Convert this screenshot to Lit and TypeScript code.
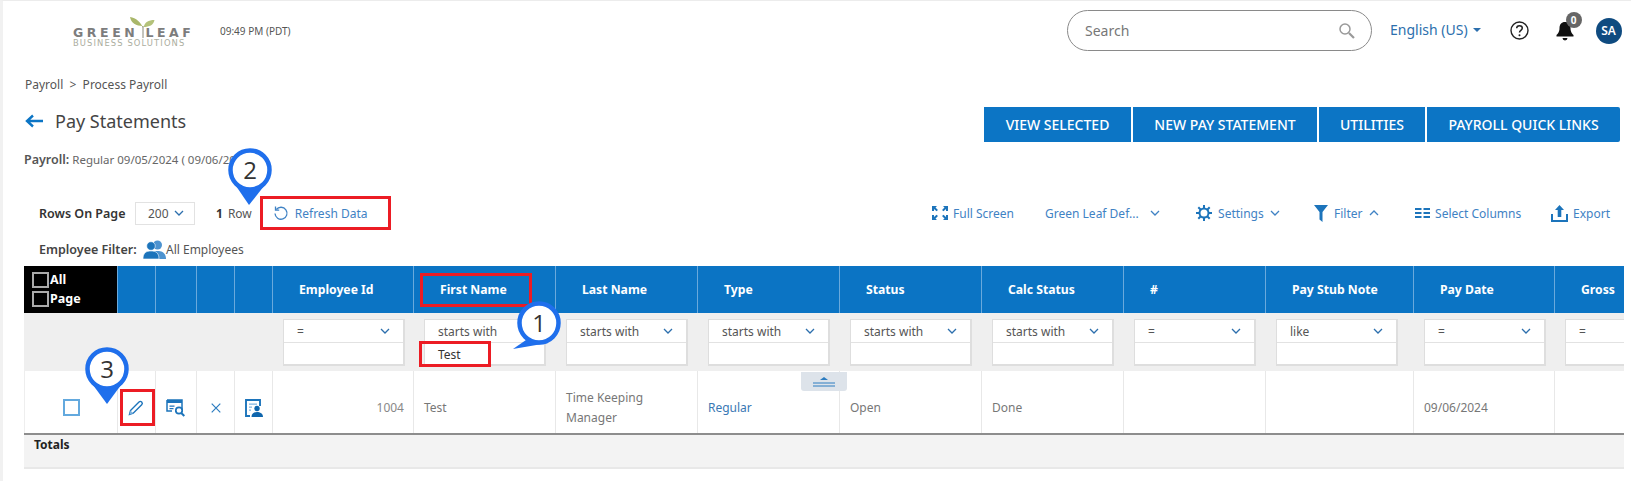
import { LitElement, html, css, svg } from "lit";
import { customElement } from "lit/decorators.js";

const chev = (up = false, cls = "chev") => html`<svg class=${cls} viewBox="0 0 10 6" width="10" height="6"><path d=${up ? "M1 5l4-4 4 4" : "M1 1l4 4 4-4"} fill="none" stroke="currentColor" stroke-width="1.3"/></svg>`;

const COLS = [
  { name: "Employee Id", op: "=", val: "", data: "1004", cls: "num" },
  { name: "First Name", op: "starts with", val: "Test", data: "Test", cls: "" },
  { name: "Last Name", op: "starts with", val: "", data: "Time Keeping Manager", cls: "" },
  { name: "Type", op: "starts with", val: "", data: "Regular", cls: "link" },
  { name: "Status", op: "starts with", val: "", data: "Open", cls: "" },
  { name: "Calc Status", op: "starts with", val: "", data: "Done", cls: "" },
  { name: "#", op: "=", val: "", data: "", cls: "" },
  { name: "Pay Stub Note", op: "like", val: "", data: "", cls: "" },
  { name: "Pay Date", op: "=", val: "", data: "09/06/2024", cls: "" },
  { name: "Gross", op: "=", val: "", data: "", cls: "last" },
];

const marker = (n: string, x: number, y: number, tx: number, ty: number, a1: number[], a2: number[]) => {
  const w = 70, h = 70;
  return html`<svg class="marker" style="left:${x - 35}px;top:${y - 25}px" width=${w} height=${h} viewBox="0 0 70 70">
    ${svg`<path d="M${a1[0]} ${a1[1]}L${tx - x + 35} ${ty - y + 25}L${a2[0]} ${a2[1]}Z" fill="#1f6fec"/>
    <circle cx="35" cy="25" r="19.5" fill="#fff" stroke="#1f6fec" stroke-width="4.5"/>
    <text x="35" y="33.5" text-anchor="middle" font-family="Open Sans, sans-serif" font-size="24" fill="#333">${n}</text>`}
  </svg>`;
};

@customElement("app-root")
export class AppRoot extends LitElement {
  static styles = css`
    :host {
      display: block;
      position: relative;
      width: 1631px;
      height: 481px;
      overflow: hidden;
      background: #fff;
      box-sizing: border-box;
      border-left: 3px solid #f1f1f1;
      border-top: 1px solid #ececec;
      font-family: "Noto Sans", sans-serif;
      font-size: 12px;
      color: #555;
    }
    .topbar { display: flex; align-items: center; height: 59px; padding-left: 70px; }
    .logo { width: 123px; height: 30px; display: flex; flex-direction: column; align-items: flex-start; position: relative; margin-top: 2px; font-family: "DejaVu Sans", sans-serif; flex: none; }
    .logo svg { position: absolute; left: 57px; top: 0; }
    .logo .l1 { font-size: 12.5px; font-weight: 700; letter-spacing: 3.6px; color: #7d7d7d; line-height: 12px; margin-top: 10px; white-space: nowrap; word-spacing: -1px; }
    .logo .l2 { font-size: 8.4px; color: #abad9e; line-height: 9px; white-space: nowrap; letter-spacing: 1.1px; }
    .time { font-size: 10px; color: #555; margin-left: 24px; margin-top: 1px; width: 200px; white-space: nowrap; flex: none; }
    .search { margin-left: 647px; width: 305px; height: 41px; box-sizing: border-box; border: 1px solid #8a8a8a; border-radius: 21px; display: flex; align-items: center; justify-content: space-between; padding: 0 16px 0 17px; color: #777; font-size: 14px; flex: none; }
    .lang { color: #2c6fad; font-size: 14px; margin-left: 18px; display: flex; align-items: center; gap: 5px; white-space: nowrap; margin-top: -2px; }
    .caret { width: 0; height: 0; border-left: 4px solid transparent; border-right: 4px solid transparent; border-top: 4px solid #2c6fad; }
    .help { margin-left: 29px; display: flex; }
    .bell { margin-left: 27px; position: relative; display: flex; width: 18px; }
    .badge { position: absolute; left: 10px; top: -9px; width: 16px; height: 16px; border-radius: 50%; background: #666; color: #fff; font-size: 10px; font-weight: 700; display: flex; align-items: center; justify-content: center; }
    .avatar { margin-left: 22px; width: 26px; height: 26px; border-radius: 50%; background: #0f4b80; color: #fff; font-size: 12px; font-weight: 600; display: flex; align-items: center; justify-content: center; flex: none; }

    main { padding-left: 21px; }
    .crumb { height: 20px; margin-top: 15px; line-height: 20px; font-size: 12px; color: #555; white-space: nowrap; margin-left: 1px; }
    .titlebar { display: flex; align-items: center; height: 35px; margin-top: 12px; }
    .arrow { margin: 0 0 7px 1px; }
    .titlebar h1 { margin: 0 0 8px 11px; font-size: 18px; font-weight: 400; color: #444; }
    .buttons { margin-left: auto; margin-right: 11px; display: flex; gap: 2px; }
    .btn { height: 35px; background: #0c75c5; color: #fff; font-size: 14px; display: flex; align-items: center; justify-content: center; white-space: nowrap; font-weight: 500; }
    .btn.last { border-radius: 0 2px 2px 0; }
    .payroll { height: 22px; line-height: 22px; margin-top: 7px; font-size: 11.5px; color: #666; white-space: nowrap; }
    .payroll b { color: #555; font-weight: 600; font-size: 12.5px; }
    .tools { display: flex; align-items: center; height: 32px; margin-top: 26px; padding-left: 15px; white-space: nowrap; }
    .rowlbl { font-weight: 600; color: #333; font-size: 12.5px; width: 96px; flex: none; }
    .sel { width: 60px; height: 23px; box-sizing: border-box; border: 1px solid #e2e2e2; display: flex; align-items: center; gap: 5px; padding-left: 12px; color: #555; }
    .sel .chev { color: #2c6fad; }
    .cnt { margin-left: 21px; font-size: 12px; color: #555; }
    .cnt b { color: #333; margin-right: 5px; }
    .refresh { margin-left: 21px; color: #3f82c4; display: flex; align-items: center; gap: 6px; font-size: 12px; }
    .right { margin-left: auto; margin-right: 21px; display: flex; align-items: center; color: #3f82c4; font-size: 12px; }
    .right > span { display: flex; align-items: center; gap: 5px; }
    .emp { display: flex; align-items: center; height: 24px; margin-top: 8px; padding-left: 15px; white-space: nowrap; }
    .emp b { font-weight: 600; color: #444; font-size: 12.5px; width: 104px; flex: none; }
    .emp span { color: #555; }

    .table { display: grid; grid-template-columns: 93px 38px 41px 38px 38px 141px 142px 142px 142px 142px 142px 142px 148px 141px 70px; grid-template-rows: 47px 58px 62px 2px 34px; margin-top: 5px; width: 1600px; overflow: hidden; }
    .h { background: #0b74c4; color: #fff; font-weight: 700; font-size: 12.2px; display: flex; align-items: center; padding-left: 26px; border-left: 1px solid #6aa9dc; white-space: nowrap; box-sizing: border-box; }
    .h.tiny { padding: 0; }
    .black { background: #000; color: #fff; font-weight: 700; font-size: 12.5px; display: flex; flex-direction: column; gap: 2px; padding: 5px 0 0 8px; box-sizing: border-box; }
    .black div { display: flex; align-items: center; height: 17px; gap: 1px; }
    .black i { width: 17px; height: 16px; box-sizing: border-box; border: 2px solid #aaa; display: block; }
    .f0 { grid-column: span 5; background: #efefef; }
    .f { background: #efefef; padding: 6px 9px 0 11px; box-sizing: border-box; min-width: 0; overflow: hidden; }
    .f.last { padding-right: 0; }
    .fbox { height: 47px; border: 1px solid #dedede; border-bottom-width: 2px; border-right-width: 2px; background: #fff; box-sizing: border-box; width: 122px; }
    .fsel { height: 22px; border-bottom: 1px solid #e2e2e2; display: flex; align-items: center; justify-content: space-between; padding: 0 13px 0 13px; color: #555; font-size: 12px; }
    .fsel .chev { color: #2c6fad; }
    .fin { padding-left: 13px; line-height: 24px; color: #333; font-size: 12px; }
    .c { border-left: 1px solid #e8e8e8; display: flex; align-items: center; color: #777; box-sizing: border-box; background: #fff; padding: 12px 10px 0; line-height: 20px; font-size: 12px; }
    .c.first { border-left: 1px solid #eee; justify-content: center; padding: 11px 0 0 0; }
    .c.first i { width: 17px; height: 17px; box-sizing: border-box; border: 2px solid #63a9de; display: block; }
    .c.icon { justify-content: center; padding: 11px 0 0 0; }
    .c.num { justify-content: flex-end; color: #888; padding-right: 9px; }
    .c.link { color: #3a78b4; }
    .sep { grid-column: 1 / -1; background: #8d8d8d; }
    .totals { grid-column: 1 / -1; background: #f3f3f3; border-bottom: 2px solid #e8e8e8; font-weight: 700; color: #222; padding-left: 10px; line-height: 19px; box-sizing: border-box; }

    .red { position: absolute; border: 3.5px solid #ec1c24; box-sizing: border-box; pointer-events: none; }
    .marker { position: absolute; overflow: visible; }
    .tab { position: absolute; left: 798px; top: 371px; width: 46px; height: 19px; background: #dde3ea; border-radius: 0 0 3px 3px; display: flex; align-items: center; justify-content: center; }
  `;

  render() {
    const buttons = [["VIEW SELECTED", 147], ["NEW PAY STATEMENT", 184], ["UTILITIES", 106], ["PAYROLL QUICK LINKS", 193]] as const;
    return html`
      <div class="topbar">
        <div class="logo">
          <svg width="26" height="21" viewBox="0 0 26 21"><path d="M13 11C11 5 6 1 0 0c1 6 6 9 13 9z" fill="#a9b76a"/><path d="M13.500 11c1-6 5-8 11-8-1 5-5 7-11 7z" fill="#b4c27a"/><path d="M13 9v12" stroke="#8a8a7a" stroke-width="1"/></svg>
          <div class="l1">GREEN LEAF</div>
          <div class="l2">BUSINESS SOLUTIONS</div>
        </div>
        <div class="time">09:49 PM (PDT)</div>
        <div class="search">
          <span>Search</span>
          <svg width="17" height="17" viewBox="0 0 17 17"><circle cx="7" cy="7" r="5" fill="none" stroke="#999" stroke-width="1.5"/><path d="M11 11l5 5" stroke="#999" stroke-width="2.2"/></svg>
        </div>
        <div class="lang">English (US)<span class="caret"></span></div>
        <div class="help"><svg width="19" height="19" viewBox="0 0 19 19"><circle cx="9.500" cy="9.500" r="8.500" fill="none" stroke="#222" stroke-width="1.400"/><path d="M6.700 7.300c0-1.700 1.200-2.600 2.800-2.600s2.800.9 2.800 2.400c0 2.200-2.800 2.200-2.800 4.400" fill="none" stroke="#222" stroke-width="1.500"/><circle cx="9.500" cy="14.200" r="1" fill="#222"/></svg></div>
        <div class="bell">
          <svg width="18" height="20" viewBox="0 0 18 20"><path d="M9 1c-3.600 0-5.500 2.600-5.500 6 0 4-1.600 5.600-3 7v1.500h17V14c-1.400-1.400-3-3-3-7 0-3.400-1.900-6-5.500-6z" fill="#111"/><path d="M6.500 17h5a2.500 2.500 0 0 1-5 0z" fill="#111"/></svg>
          <span class="badge">0</span>
        </div>
        <div class="avatar">SA</div>
      </div>

      <main>
        <div class="crumb">Payroll &nbsp;&gt;&nbsp; Process Payroll</div>
        <div class="titlebar">
          <svg class="arrow" width="19" height="14" viewBox="0 0 19 14"><path d="M18 7H3M8 1.500 2 7l6 5.500" fill="none" stroke="#0c75c5" stroke-width="2.400"/></svg>
          <h1>Pay Statements</h1>
          <div class="buttons">
            ${buttons.map(([t, w], i) => html`<div class="btn ${i === 3 ? "last" : ""}" style="width:${w}px">${t}</div>`)}
          </div>
        </div>
        <div class="payroll"><b>Payroll:</b> Regular 09/05/2024 ( 09/06/2024 )</div>
        <div class="tools">
          <span class="rowlbl">Rows On Page</span>
          <span class="sel">200 ${chev()}</span>
          <span class="cnt"><b>1</b>Row</span>
          <span class="refresh">
            <svg width="16" height="16" viewBox="0 0 16 16"><path d="M3.300 4.500A6 6 0 1 1 2 8.500" fill="none" stroke="#3f82c4" stroke-width="1.300"/><path d="M2.500 1.500v3.700h3.700" fill="none" stroke="#3f82c4" stroke-width="1.300"/></svg>
            Refresh Data
          </span>
          <div class="right">
            <span style="width:113px">
              <svg width="16" height="14" viewBox="0 0 16 14"><path fill="#1c74bb" d="M0 0h5L3.500 1.500 6 4 4.500 5.300 2 3v2H0zM16 0h-5l1.500 1.500L10 4l1.500 1.300L14 3v2h2zM0 14h5l-1.500-1.500L6 10 4.500 8.700 2 11V9H0zM16 14h-5l1.500-1.500L10 10l1.500-1.300L14 11V9h2z"/></svg>
              Full Screen
            </span>
            <span style="width:151px;gap:11px">Green Leaf Def... ${chev()}</span>
            <span style="width:118px;gap:6px">
              <svg width="16" height="16" viewBox="0 0 16 16"><g stroke="#1c74bb" stroke-width="2"><path d="M8 0v16M0 8h16M2.300 2.300l11.400 11.400M13.700 2.300 2.300 13.700"/></g><circle cx="8" cy="8" r="4.500" fill="#fff" stroke="#1c74bb" stroke-width="2"/></svg>
              Settings ${chev()}
            </span>
            <span style="width:101px;gap:6px">
              <svg width="14" height="17" viewBox="0 0 14 17"><path d="M0 0h14L8.500 7v10l-3-2.500V7z" fill="#1c74bb"/></svg>
              Filter ${chev(true)}
            </span>
            <span style="width:136px">
              <svg width="15" height="10" viewBox="0 0 15 10"><path fill="#1c74bb" d="M0 0h6.500v2H0zM8.500 0H15v2H8.500zM0 4h6.500v2H0zM8.500 4H15v2H8.500zM0 8h6.500v2H0zM8.500 8H15v2H8.500z"/></svg>
              Select Columns
            </span>
            <span>
              <svg width="17" height="18" viewBox="0 0 17 18"><path d="M1 10v7h15v-7" fill="none" stroke="#1c74bb" stroke-width="2"/><path d="M8.500 1 13 6h-2.700v7H6.700V6H4z" fill="#1c74bb"/></svg>
              Export
            </span>
          </div>
        </div>
        <div class="emp">
          <b>Employee Filter:</b>
          <svg width="23" height="19" viewBox="0 0 23 19" style="flex:none"><circle cx="14.500" cy="5" r="4.500" fill="#4d93d0"/><path d="M7 19c0-6 3-8 7.500-8S23 13 23 19z" fill="#4d93d0"/><circle cx="8" cy="6" r="4.300" fill="#1c74bb" stroke="#fff" stroke-width=".6"/><path d="M0 19c0-6 3-8 8-8s8 2 8 8z" fill="#1c74bb" stroke="#fff" stroke-width=".6"/></svg>
          <span>All Employees</span>
        </div>

        <div class="table">
          <div class="black"><div><i></i>All</div><div><i></i>Page</div></div>
          <div class="h tiny"></div><div class="h tiny"></div><div class="h tiny"></div><div class="h tiny"></div>
          ${COLS.map((c) => html`<div class="h">${c.name}</div>`)}

          <div class="f0"></div>
          ${COLS.map((c) => html`<div class="f ${c.cls === "last" ? "last" : ""}">
            <div class="fbox">
              <div class="fsel"><span>${c.op}</span>${chev()}</div>
              <div class="fin">${c.val}</div>
            </div>
          </div>`)}

          <div class="c first"><i></i></div>
          <div class="c icon">
            <svg width="17" height="17" viewBox="0 0 17 17"><path d="M2.500 11.500 11 3c.8-.8 1.800-.8 2.700 0 .8.900.8 1.900 0 2.700L5.200 14.200 1.500 15.500z" fill="none" stroke="#1c74bb" stroke-width="1.400"/><path d="M1.500 15.500 2.500 11.500 5.200 14.200z" fill="#7fb4e0"/></svg>
          </div>
          <div class="c icon">
            <svg width="20" height="18" viewBox="0 0 20 18"><path d="M1 1h15v3H1z" fill="#1c74bb"/><path d="M1 1h15v11H9M1 1v11h5" fill="none" stroke="#1c74bb" stroke-width="1.500"/><path d="M3.500 6.500h5v1.300h-5zM3.500 9h4v1.300h-4z" fill="#1c74bb"/><circle cx="13" cy="11.500" r="3.200" fill="#fff" stroke="#1c74bb" stroke-width="1.700"/><path d="m15.300 14 3 3" stroke="#1c74bb" stroke-width="2"/></svg>
          </div>
          <div class="c icon">
            <svg width="10" height="10" viewBox="0 0 10 10"><path d="M.7.7l8.600 8.600M9.300.7.7 9.300" stroke="#2c7cc0" stroke-width="1.200"/></svg>
          </div>
          <div class="c icon">
            <svg width="18" height="18" viewBox="0 0 18 18"><path d="M5 17H1V1h14v6" fill="none" stroke="#1c74bb" stroke-width="1.900"/><path d="M4 4.500h8v1.300H4zM4 7.500h3v1.300H4zM4 10.500h2v1.300H4z" fill="#7fb4e0"/><circle cx="12" cy="9.500" r="2.700" fill="#0f66ad"/><path d="M6.500 18c0-3.600 2.500-5 5.500-5s6 1.400 6 5z" fill="#0f66ad"/></svg>
          </div>
          ${COLS.map((c) => html`<div class="c ${c.cls}">${c.data}</div>`)}

          <div class="sep"></div>
          <div class="totals">Totals</div>
        </div>
      </main>

      <div class="tab">
        <svg width="24" height="12" viewBox="0 0 24 12"><path d="M12 1l4 3H8z" fill="#2c7cc0"/><path d="M1 7h22M1 10h22" stroke="#2c7cc0" stroke-width="1"/></svg>
      </div>

      <div class="red" style="left:257px;top:195px;width:131px;height:34px"></div>
      <div class="red" style="left:417px;top:272px;width:112px;height:34px"></div>
      <div class="red" style="left:416px;top:340px;width:72px;height:26px"></div>
      <div class="red" style="left:117px;top:388px;width:35px;height:37px"></div>

      ${marker("1", 536, 322, 510, 348, [22, 42], [44, 45])}
      ${marker("2", 247, 169, 246, 204, [21, 41], [49, 41])}
      ${marker("3", 104, 368, 104, 403, [21, 41], [49, 41])}
    `;
  }
}
